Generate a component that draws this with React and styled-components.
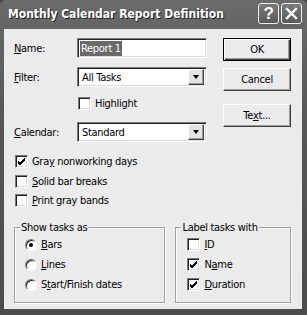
import React from 'react';
import styled, { createGlobalStyle } from 'styled-components';

const GlobalStyle = createGlobalStyle`
    html, body {
        margin: 0;
        padding: 0;
        background: #4a4a4a;
    }
    * {
        box-sizing: border-box;
    }
`;

const Window = styled.div`
    width: 307px;
    height: 315px;
    display: flex;
    flex-direction: column;
    background: linear-gradient(180deg, #6a6a6a 0%, #555 40%, #4c4c4c 100%);
    border-radius: 6px 6px 0 0;
    padding: 0 5px 6px 4px;
    font-family: Tahoma, "DejaVu Sans Condensed", "Liberation Sans", sans-serif;
    font-size: 11px;
    letter-spacing: -0.3px;
    color: #000;
    overflow: hidden;
`;

const TitleBar = styled.div`
    height: 29px;
    display: flex;
    align-items: center;
    padding: 0 0 2px 4px;
    gap: 2px;
`;

const TitleText = styled.div`
    flex: 1;
    color: #fff;
    font-family: "DejaVu Sans Condensed", "Liberation Sans", sans-serif;
    font-weight: 700;
    font-size: 12px;
    letter-spacing: 0;
    text-shadow: 1px 1px 0 #222;
    white-space: nowrap;
`;

const CaptionButton = styled.div`
    width: 21px;
    height: 21px;
    border: 1px solid #eee;
    border-radius: 3px;
    background: linear-gradient(180deg, #7a7a7a, #5a5a5a);
    display: flex;
    align-items: center;
    justify-content: center;
    color: #fff;
    font-family: "Liberation Sans", sans-serif;
    font-weight: 700;
    font-size: 17px;
`;

const Body = styled.div`
    flex: 1;
    background: #ebebeb;
    padding: 9px 11px 0 10px;
    display: flex;
    flex-direction: column;
`;

const Top = styled.div`
    display: flex;
    gap: 16px;
`;

const LeftCol = styled.div`
    width: 193px;
    display: flex;
    flex-direction: column;
`;

const FieldRow = styled.div`
    display: flex;
    align-items: center;
    height: 20px;
    margin-top: ${p => p.$mt || 0}px;
`;

const Label = styled.div`
    width: 63px;
`;

const Sunken = styled.div`
    flex: 1;
    height: 20px;
    background: #fff;
    border: 1px solid;
    border-color: #7a7a7a #fff #fff #7a7a7a;
    box-shadow: inset 1px 1px 0 #222, inset -1px -1px 0 #ddd;
    display: flex;
    align-items: center;
    padding: 0 2px;
`;

const Selection = styled.span`
    background: #6a6a6a;
    color: #fff;
    padding: 1px 1px;
`;

const SelectText = styled.span`
    flex: 1;
    padding-left: 2px;
`;

const DropButton = styled.div`
    width: 16px;
    height: 16px;
    background: #e4e4e4;
    border: 1px solid;
    border-color: #fff #404040 #404040 #fff;
    box-shadow: inset -1px -1px 0 #9a9a9a;
    display: flex;
    align-items: center;
    justify-content: center;
    &::after {
        content: '';
        border-left: 3.5px solid transparent;
        border-right: 3.5px solid transparent;
        border-top: 4px solid #000;
    }
`;

const CheckRow = styled.label`
    display: flex;
    align-items: center;
    gap: 4px;
    height: 13px;
    margin-top: ${p => p.$mt || 0}px;
    margin-left: ${p => p.$ml || 0}px;
`;

const Box = styled.span`
    width: 13px;
    height: 13px;
    background: #fff;
    border: 1px solid;
    border-color: #7a7a7a #fff #fff #7a7a7a;
    box-shadow: inset 1px 1px 0 #222, inset -1px -1px 0 #ddd;
    display: flex;
    align-items: center;
    justify-content: center;
    flex: none;
`;

const Radio = styled.span`
    width: 12px;
    height: 12px;
    border-radius: 50%;
    background: #fff;
    border: 1px solid;
    border-color: #7a7a7a #fff #fff #7a7a7a;
    box-shadow: inset 1px 1px 0 #222;
    display: flex;
    align-items: center;
    justify-content: center;
    flex: none;
    &::after {
        content: '';
        width: 4px;
        height: 4px;
        border-radius: 50%;
        background: ${p => (p.$on ? '#000' : 'transparent')};
    }
`;

const U = styled.span`
    text-decoration: underline;
`;

const ButtonCol = styled.div`
    display: flex;
    flex-direction: column;
    width: 68px;
`;

const Button = styled.div`
    height: 23px;
    margin-top: ${p => p.$mt || 0}px;
    background: #ebebeb;
    border: 1px solid;
    border-color: ${p => (p.$default ? '#000' : '#fff #404040 #404040 #fff')};
    box-shadow: ${p =>
        p.$default
            ? 'inset 1px 1px 0 #fff, inset -1px -1px 0 #404040, inset -2px -2px 0 #9a9a9a'
            : 'inset -1px -1px 0 #9a9a9a'};
    display: flex;
    align-items: center;
    justify-content: center;
`;

const Groups = styled.div`
    display: flex;
    gap: 10px;
    margin-top: 14px;
`;

const Group = styled.fieldset`
    margin: 0;
    width: ${p => p.$w}px;
    height: 82px;
    border: 1px solid #a0a0a0;
    box-shadow: inset 1px 1px 0 #fff, 1px 1px 0 #fff;
    padding: 4px 0 0 0;
    display: flex;
    flex-direction: column;
    gap: 7px;
    legend {
        padding: 0 1px;
        margin-left: 5px;
        background: #ebebeb;
        line-height: 13px;
    }
`;

const GroupItems = styled.div`
    display: flex;
    flex-direction: column;
    gap: 7px;
    padding-left: ${p => p.$pl}px;
`;

function Check({ on, children, ...props }) {
    return (
        <CheckRow {...props}>
            <Box>
                {on && (
                    <svg width="9" height="9" viewBox="0 0 9 9">
                        <path d="M1 4 L3 6 L8 1 M1 5 L3 7 L8 2 M1 6 L3 8 L8 3" stroke="#000" strokeWidth="1" fill="none" />
                    </svg>
                )}
            </Box>
            <span>{children}</span>
        </CheckRow>
    );
}

function Option({ on, children }) {
    return (
        <CheckRow>
            <Radio $on={on} />
            <span>{children}</span>
        </CheckRow>
    );
}

export default function App() {
    return (
        <>
            <GlobalStyle />
            <Window>
                <TitleBar>
                    <TitleText>Monthly Calendar Report Definition</TitleText>
                    <CaptionButton>?</CaptionButton>
                    <CaptionButton>
                        <svg width="13" height="13" viewBox="0 0 13 13">
                            <path d="M2 2 L11 11 M11 2 L2 11" stroke="#fff" strokeWidth="2.4" strokeLinecap="square" />
                        </svg>
                    </CaptionButton>
                </TitleBar>
                <Body>
                    <Top>
                        <LeftCol>
                            <FieldRow>
                                <Label><U>N</U>ame:</Label>
                                <Sunken>
                                    <Selection>Report 1</Selection>
                                </Sunken>
                            </FieldRow>
                            <FieldRow $mt={9}>
                                <Label><U>F</U>ilter:</Label>
                                <Sunken>
                                    <SelectText>All Tasks</SelectText>
                                    <DropButton />
                                </Sunken>
                            </FieldRow>
                            <Check $mt={10} $ml={64}>Highlight</Check>
                            <FieldRow $mt={12}>
                                <Label><U>C</U>alendar:</Label>
                                <Sunken>
                                    <SelectText>Standard</SelectText>
                                    <DropButton />
                                </Sunken>
                            </FieldRow>
                            <Check on $mt={13} $ml={1}>Gra<U>y</U> nonworking days</Check>
                            <Check $mt={7} $ml={1}><U>S</U>olid bar breaks</Check>
                            <Check $mt={6} $ml={1}><U>P</U>rint gray bands</Check>
                        </LeftCol>
                        <ButtonCol>
                            <Button $default>OK</Button>
                            <Button $mt={7}>Cancel</Button>
                            <Button $mt={13}>Te<U>x</U>t...</Button>
                        </ButtonCol>
                    </Top>
                    <Groups>
                        <Group $w={152}>
                            <legend>Show tasks as</legend>
                            <GroupItems $pl={10}>
                                <Option on><U>B</U>ars</Option>
                                <Option><U>L</U>ines</Option>
                                <Option>S<U>t</U>art/Finish dates</Option>
                            </GroupItems>
                        </Group>
                        <Group $w={116}>
                            <legend>Label tasks with</legend>
                            <GroupItems $pl={11}>
                                <Check><U>I</U>D</Check>
                                <Check on>N<U>a</U>me</Check>
                                <Check on><U>D</U>uration</Check>
                            </GroupItems>
                        </Group>
                    </Groups>
                </Body>
            </Window>
        </>
    );
}
